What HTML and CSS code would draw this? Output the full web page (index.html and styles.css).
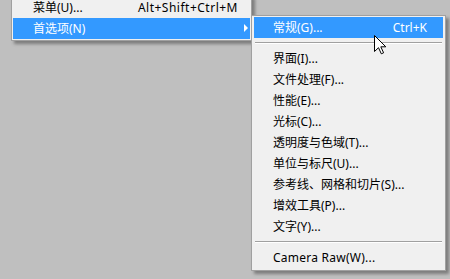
FILE: index.html
```html
<!DOCTYPE html>
<html>
<head>
<meta charset="utf-8">
<link rel="stylesheet" href="styles.css">
</head>
<body>
<div class="screen">
  <div class="menu main">
    <div class="item"><span class="label">菜单(U)...</span><span class="key wide">Alt+Shift+Ctrl+M</span><span class="sub-col"></span></div>
    <div class="item active"><span class="label">首选项(N)</span><span class="key"></span><span class="sub-col"><span class="arrow"></span></span></div>
  </div>
  <div class="menu sub">
    <div class="item active"><span class="label">常规(G)...</span><span class="key">Ctrl+K</span></div>
    <div class="sep"></div>
    <div class="item"><span class="label">界面(I)...</span></div>
    <div class="item"><span class="label">文件处理(F)...</span></div>
    <div class="item"><span class="label">性能(E)...</span></div>
    <div class="item"><span class="label">光标(C)...</span></div>
    <div class="item"><span class="label">透明度与色域(T)...</span></div>
    <div class="item"><span class="label">单位与标尺(U)...</span></div>
    <div class="item"><span class="label">参考线、网格和切片(S)...</span></div>
    <div class="item"><span class="label">增效工具(P)...</span></div>
    <div class="item"><span class="label">文字(Y)...</span></div>
    <div class="sep"></div>
    <div class="item"><span class="label latin">Camera Raw(W)...</span></div>
  </div>
  <svg class="cursor" width="13" height="20" viewBox="0 0 13 20">
    <path d="M0.5 0.5 L0.5 16.5 L4.5 12.7 L7.3 18.8 L9.6 17.8 L6.8 11.8 L11.8 11.8 Z" fill="#fff" stroke="#000" stroke-width="1" stroke-linejoin="miter"/>
  </svg>
</div>
</body>
</html>
```

FILE: styles.css
```css
html, body {
  margin: 0;
  padding: 0;
  background: #bfbfbf;
}

.screen {
  position: relative;
  width: 450px;
  height: 279px;
  overflow: hidden;
  font-family: "Noto Sans", "Noto Sans CJK SC", sans-serif;
  font-size: 12px;
  color: #000;
}

.menu {
  background: #f0f0f0;
  border: 1px solid #a0a0a0;
  box-sizing: border-box;
  box-shadow: 3px 3px 3px rgba(0, 0, 0, 0.35);
}

.main {
  margin-top: -5px;
  margin-left: 11px;
  width: 241px;
  padding: 1px;
}

.item {
  display: flex;
  align-items: center;
  height: 21px;
  line-height: 21px;
  white-space: nowrap;
}

.item.active {
  background: #3399ff;
  color: #fff;
}

.main .item {
  padding-left: 20px;
}

.label {
  flex: 1;
}

.key.wide {
  letter-spacing: 0.5px;
}

.latin {
  letter-spacing: 0.25px;
}

.main .sub-col {
  position: relative;
  width: 12px;
  height: 21px;
}

.arrow {
  position: absolute;
  left: 6px;
  top: 6px;
  width: 0;
  height: 0;
  border-left: 4px solid #fff;
  border-top: 4px solid transparent;
  border-bottom: 4px solid transparent;
}

.sub {
  position: absolute;
  left: 251px;
  top: 15px;
  width: 195px;
  padding: 1px 2px 2px 2px;
}

.sub .item {
  padding-left: 19px;
  padding-right: 16px;
}

.sep {
  height: 10px;
  display: flex;
  flex-direction: column;
  padding: 4px 1px 0 1px;
  box-sizing: border-box;
}

.sep::before {
  content: "";
  display: block;
  height: 1px;
  background: #a0a0a0;
}

.sep::after {
  content: "";
  display: block;
  height: 1px;
  background: #ffffff;
}

.cursor {
  position: absolute;
  left: 374px;
  top: 35px;
}
```
